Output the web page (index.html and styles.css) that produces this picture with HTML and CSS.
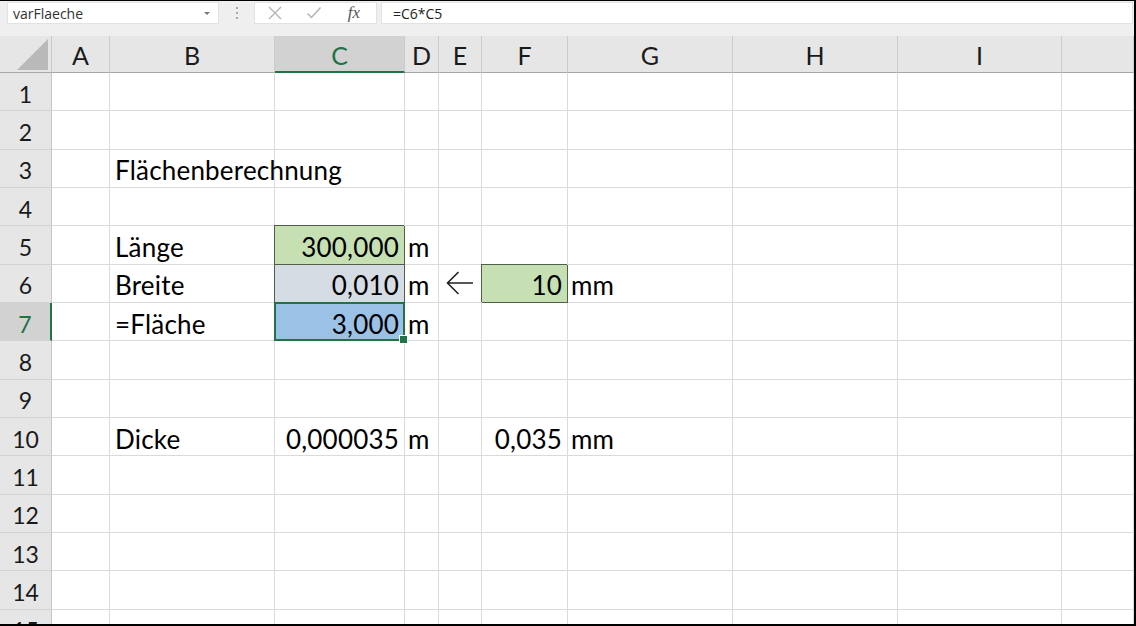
FILE: index.html
```html
<!DOCTYPE html>
<html lang="de">
<head>
<meta charset="utf-8">
<title>varFlaeche</title>
<link rel="stylesheet" href="styles.css">
</head>
<body>
<div class="frame">
  <div class="fbar">
    <div class="namebox"><span>varFlaeche</span><span class="caret"></span></div>
    <div class="grip"><i></i><i></i><i></i></div>
    <div class="fxbox">
      <span><svg width="16" height="14" viewBox="0 0 16 14"><path d="M2 1L14 13M14 1L2 13" stroke="#b4b4b4" stroke-width="1.4" fill="none"/></svg></span>
      <span><svg width="16" height="14" viewBox="0 0 16 14"><path d="M1.5 7.5L5.5 11.5L14.5 1.5" stroke="#b4b4b4" stroke-width="1.5" fill="none"/></svg></span>
      <span class="fx">fx</span>
    </div>
    <div class="input">=C6*C5</div>
  </div>
  <div class="band"></div>
  <div class="sheet">
    <div class="corner"><svg width="31" height="31" viewBox="0 0 31 31"><polygon points="31,0 31,31 0,31" fill="#b9b9b9"/></svg></div>
    <div class="ch">A</div><div class="ch">B</div><div class="ch sel">C</div><div class="ch">D</div><div class="ch">E</div><div class="ch">F</div><div class="ch">G</div><div class="ch">H</div><div class="ch">I</div><div class="ch"></div>

    <div class="rh">1</div><div class="c"></div><div class="c"></div><div class="c"></div><div class="c"></div><div class="c"></div><div class="c"></div><div class="c"></div><div class="c"></div><div class="c"></div><div class="c"></div>
    <div class="rh">2</div><div class="c"></div><div class="c"></div><div class="c"></div><div class="c"></div><div class="c"></div><div class="c"></div><div class="c"></div><div class="c"></div><div class="c"></div><div class="c"></div>
    <div class="rh">3</div><div class="c"></div><div class="c">Flächenberechnung</div><div class="c"></div><div class="c"></div><div class="c"></div><div class="c"></div><div class="c"></div><div class="c"></div><div class="c"></div><div class="c"></div>
    <div class="rh">4</div><div class="c"></div><div class="c"></div><div class="c"></div><div class="c"></div><div class="c"></div><div class="c"></div><div class="c"></div><div class="c"></div><div class="c"></div><div class="c"></div>
    <div class="rh">5</div><div class="c"></div><div class="c">Länge</div><div class="c num g box">300,000</div><div class="c unit">m</div><div class="c"></div><div class="c"></div><div class="c"></div><div class="c"></div><div class="c"></div><div class="c"></div>
    <div class="rh">6</div><div class="c"></div><div class="c">Breite</div><div class="c num gb box">0,010</div><div class="c unit">m</div><div class="c arrow"><svg width="28" height="24" viewBox="0 0 28 24"><path d="M27 12H1.5M12.5 1L1.5 12L12.5 23" stroke="#222" stroke-width="1.6" fill="none"/></svg></div><div class="c num g box">10</div><div class="c unit">mm</div><div class="c"></div><div class="c"></div><div class="c"></div>
    <div class="rh sel">7</div><div class="c"></div><div class="c">=Fläche</div><div class="c num blue box active">3,000</div><div class="c unit">m</div><div class="c"></div><div class="c"></div><div class="c"></div><div class="c"></div><div class="c"></div><div class="c"></div>
    <div class="rh">8</div><div class="c"></div><div class="c"></div><div class="c"></div><div class="c"></div><div class="c"></div><div class="c"></div><div class="c"></div><div class="c"></div><div class="c"></div><div class="c"></div>
    <div class="rh">9</div><div class="c"></div><div class="c"></div><div class="c"></div><div class="c"></div><div class="c"></div><div class="c"></div><div class="c"></div><div class="c"></div><div class="c"></div><div class="c"></div>
    <div class="rh">10</div><div class="c"></div><div class="c">Dicke</div><div class="c num">0,000035</div><div class="c unit">m</div><div class="c"></div><div class="c num">0,035</div><div class="c unit">mm</div><div class="c"></div><div class="c"></div><div class="c"></div>
    <div class="rh">11</div><div class="c"></div><div class="c"></div><div class="c"></div><div class="c"></div><div class="c"></div><div class="c"></div><div class="c"></div><div class="c"></div><div class="c"></div><div class="c"></div>
    <div class="rh">12</div><div class="c"></div><div class="c"></div><div class="c"></div><div class="c"></div><div class="c"></div><div class="c"></div><div class="c"></div><div class="c"></div><div class="c"></div><div class="c"></div>
    <div class="rh">13</div><div class="c"></div><div class="c"></div><div class="c"></div><div class="c"></div><div class="c"></div><div class="c"></div><div class="c"></div><div class="c"></div><div class="c"></div><div class="c"></div>
    <div class="rh">14</div><div class="c"></div><div class="c"></div><div class="c"></div><div class="c"></div><div class="c"></div><div class="c"></div><div class="c"></div><div class="c"></div><div class="c"></div><div class="c"></div>
    <div class="rh">15</div><div class="c"></div><div class="c"></div><div class="c"></div><div class="c"></div><div class="c"></div><div class="c"></div><div class="c"></div><div class="c"></div><div class="c"></div><div class="c"></div>
  </div>
</div>
</body>
</html>
```
FILE: styles.css
```css
* { box-sizing: border-box; margin: 0; padding: 0; }
html, body { width: 1136px; height: 626px; overflow: hidden; background: #fff; }
body { font-family: Lato, "Liberation Sans", sans-serif; color: #000; }

.frame {
  width: 1136px; height: 626px;
  border-top: 1px solid #000; border-right: 2px solid #000; border-bottom: 2px solid #000;
  overflow: hidden; display: flex; flex-direction: column; background: #fff;
}

.fbar {
  display: flex; height: 23px; flex: none;
  padding: 1px 1px 0 7px; background: #efefef;
}
.namebox {
  width: 212px; background: #fff; border: 1px solid #e2e2e2;
  display: flex; align-items: center; justify-content: space-between;
  padding: 0 8px 0 5px;
  font: 14px "Open Sans", sans-serif; color: #333;
}
.caret { width: 0; height: 0; border-left: 3px solid transparent; border-right: 3px solid transparent; border-top: 3px solid #777; }
.grip { width: 35px; display: flex; flex-direction: column; align-items: center; justify-content: center; gap: 3px; }
.grip i { display: block; width: 2px; height: 2px; background: #a8a8a8; }
.fxbox { width: 123px; background: #fff; border: 1px solid #e2e2e2; display: flex; align-items: center; }
.fxbox span { width: 40px; display: flex; justify-content: center; align-items: center; }
.fxbox span:first-child { width: 39px; }
.fx { font: italic 17px "Liberation Serif", serif; color: #555; }
.input {
  flex: 1; margin-left: 4px; background: #fff; border: 1px solid #e2e2e2;
  font: 14px "Open Sans", sans-serif; color: #222;
  padding-left: 11px; display: flex; align-items: center;
}
.band { height: 12px; flex: none; background: #efefef; }

.sheet {
  display: grid;
  grid-template-columns: 52px 58px 165px 130px 34px 43px 86px 165px 165px 164px 1fr;
  grid-template-rows: 37px;
  grid-auto-rows: 38.33px;
}
.corner {
  background: #e6e6e6; border-right: 1px solid #c9c9c9; border-bottom: 1px solid #a6a6a6;
  display: flex; align-items: flex-end; justify-content: flex-end; padding: 0 3px 2px 0;
}
.ch {
  background: #e6e6e6; border-right: 1px solid #cbcbcb; border-bottom: 1px solid #a6a6a6;
  display: flex; align-items: center; justify-content: center;
  font-size: 25px; color: #1a1a1a; padding-top: 2px;
}
.ch.sel { background: #d2d2d2; color: #217346; border-bottom: 2px solid #217346; }
.rh {
  background: #e6e6e6; border-right: 1px solid #c6c6c6; border-bottom: 1px solid #d2d2d2;
  display: flex; align-items: center; justify-content: center;
  font-size: 23px; color: #1a1a1a; padding-top: 4px;
}
.rh.sel { background: #d2d2d2; color: #217346; border-right: 2px solid #217346; }

.c {
  position: relative;
  border-right: 1px solid #dadada; border-bottom: 1px solid #dadada;
  display: flex; align-items: center; padding: 4px 5px 0;
  font-size: 26px; white-space: nowrap; letter-spacing: 0.2px;
}
.num { justify-content: flex-end; }
.unit { padding-left: 3px; }
.arrow { justify-content: center; padding: 0; }
.g { background: #c6e0b4; }
.gb { background: #d6dce4; }
.blue { background: #9bc2e6; }
.box {
  border-right-color: #4f5f49; border-bottom-color: #4f5f49;
  box-shadow: -1px -1px 0 0 #4f5f49;
}
.active::after {
  content: ""; position: absolute; left: -1px; top: -1px; right: -1px; bottom: -1px;
  border: 2px solid #217346;
}
.active::before {
  content: ""; position: absolute; right: -4px; bottom: -4px; width: 7px; height: 7px;
  background: #217346; border: 1px solid #fff; z-index: 2;
}
```
